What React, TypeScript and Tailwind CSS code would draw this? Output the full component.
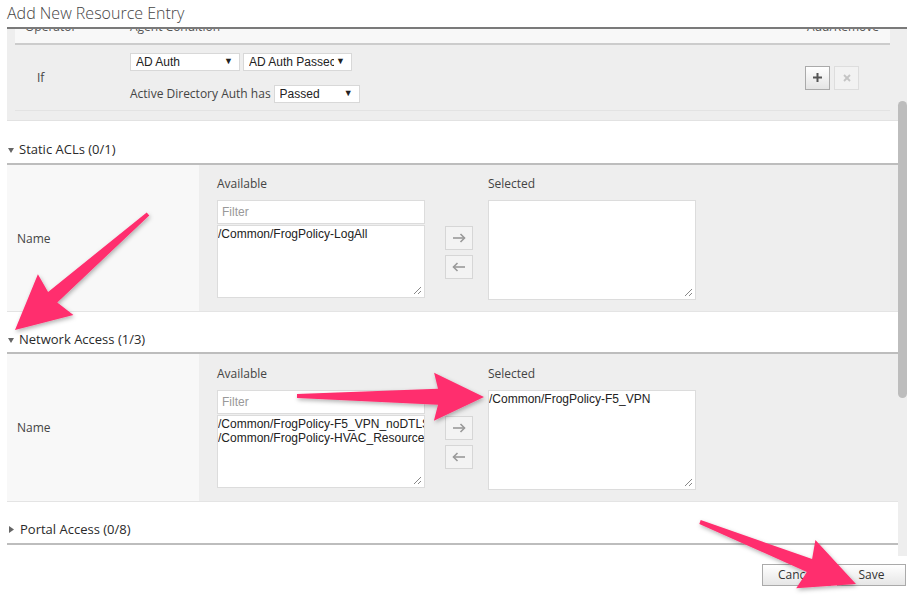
import React from "react";

type Pt = [number, number];

function arrowPoints(s: Pt, t: Pt, head: number, hw: number, w0: number, w1: number) {
  const dx = t[0] - s[0];
  const dy = t[1] - s[1];
  const len = Math.hypot(dx, dy);
  const ux = dx / len;
  const uy = dy / len;
  const nx = -uy;
  const ny = ux;
  const bx = t[0] - head * ux;
  const by = t[1] - head * uy;
  const pts: Pt[] = [
    [s[0] + w0 * nx, s[1] + w0 * ny],
    [bx + w1 * nx, by + w1 * ny],
    [bx - 4 * ux + hw * nx, by - 4 * uy + hw * ny],
    [t[0], t[1]],
    [bx - 4 * ux - hw * nx, by - 4 * uy - hw * ny],
    [bx - w1 * nx, by - w1 * ny],
    [s[0] - w0 * nx, s[1] - w0 * ny],
  ];
  return pts.map((p) => `${p[0].toFixed(1)},${p[1].toFixed(1)}`).join(" ");
}

function Triangle({ open }: { open: boolean }) {
  return open ? (
    <svg width="6" height="5" viewBox="0 0 6 5" className="mr-[5px] mb-[5px]">
      <polygon points="0,0 6,0 3,5" fill="#666" />
    </svg>
  ) : (
    <svg width="5" height="7" viewBox="0 0 5 7" className="mr-[6px] mb-[5px] ml-[1px]">
      <polygon points="0,0 5,3.5 0,7" fill="#666" />
    </svg>
  );
}

function SectionHeader({ title, open, h, pb }: { title: string; open: boolean; h: string; pb: string }) {
  return (
    <div className={`${h} ${pb} flex items-end border-b-2 border-[#bdbdbd] bg-white pl-[1px]`}>
      <Triangle open={open} />
      <span className="text-[13px] leading-[18px] text-[#2a2a2a]">{title}</span>
    </div>
  );
}

function Resizer() {
  return (
    <svg width="9" height="9" viewBox="0 0 9 9" className="absolute bottom-[2px] right-[2px]">
      <line x1="8" y1="1" x2="1" y2="8" stroke="#888" strokeWidth="1" />
      <line x1="8" y1="5" x2="5" y2="8" stroke="#888" strokeWidth="1" />
    </svg>
  );
}

function ArrowBtn({ dir }: { dir: "right" | "left" }) {
  return (
    <div className="flex h-[24px] w-[28px] items-center justify-center border border-[#d6d6d6] bg-[#f3f3f3]">
      <svg width="14" height="10" viewBox="0 0 14 10">
        {dir === "right" ? (
          <g stroke="#999" strokeWidth="1.6" fill="none">
            <line x1="1" y1="5" x2="12.5" y2="5" />
            <polyline points="8.5,1 12.5,5 8.5,9" />
          </g>
        ) : (
          <g stroke="#999" strokeWidth="1.6" fill="none">
            <line x1="1.5" y1="5" x2="13" y2="5" />
            <polyline points="5.5,1 1.5,5 5.5,9" />
          </g>
        )}
      </svg>
    </div>
  );
}

function SectionBody({ h, pt, available, selected }: { h: string; pt: string; available: string[]; selected: string[] }) {
  return (
    <div className={`${h} flex border-b border-[#e4e4e4]`}>
      <div className="flex w-[192px] items-center bg-[#f8f8f8] pl-[10px] pt-[1px] text-[12px] text-[#444]">Name</div>
      <div className={`flex flex-1 bg-[#eeeeee] pl-[18px] ${pt}`}>
        <div className="w-[208px]">
          <div className="mb-[8px] h-[16px] text-[12px] leading-[16px] text-[#444]">Available</div>
          <div className="flex h-[24px] items-center border border-[#dcdcdc] bg-white pl-[4px] font-['Liberation_Sans',Arial,sans-serif] text-[12px] text-[#999]">
            Filter
          </div>
          <div className="relative mt-[1px] h-[73px] overflow-hidden border border-[#dcdcdc] bg-white pt-[1px] font-['Liberation_Sans',Arial,sans-serif] text-[12px] leading-[14px] text-[#222]">
            {available.map((a) => (
              <div key={a} className="whitespace-nowrap">{a}</div>
            ))}
            <Resizer />
          </div>
        </div>
        <div className="ml-[20px] mt-[50px] flex flex-col gap-[5px]">
          <ArrowBtn dir="right" />
          <ArrowBtn dir="left" />
        </div>
        <div className="ml-[15px] w-[208px]">
          <div className="mb-[8px] h-[16px] text-[12px] leading-[16px] text-[#444]">Selected</div>
          <div className="relative h-[100px] overflow-hidden border border-[#dcdcdc] bg-white pt-[1px] font-['Liberation_Sans',Arial,sans-serif] text-[12px] leading-[14px] text-[#222]">
            {selected.map((a) => (
              <div key={a} className="whitespace-nowrap">{a}</div>
            ))}
            <Resizer />
          </div>
        </div>
      </div>
    </div>
  );
}

function Select({ w, label }: { w: string; label: string }) {
  return (
    <div className={`${w} flex h-[18px] items-center justify-between overflow-hidden border border-[#d8d8d8] bg-white pl-[5px] pr-[6px] font-['Liberation_Sans',Arial,sans-serif] text-[12px] text-[#222]`}>
      <span className="overflow-hidden whitespace-nowrap">{label}</span>
      <span className="ml-[2px] text-[9px] text-[#222]">▼</span>
    </div>
  );
}

export default function App() {
  const pink = "#ff2e6e";
  return (
    <div className="relative h-[600px] w-[918px] overflow-hidden bg-white font-['Open_Sans',sans-serif] text-[#333]">
      <div className="h-[27px] pl-[7px] pt-[3px] text-[16px] font-light leading-[20px] text-[#444]">Add New Resource Entry</div>
      <div className="ml-[7px] flex h-[529px] w-[900px] border-t-2 border-[#7a7a7a]">
        <div className="w-[891px] overflow-hidden">
          {/* condition block */}
          <div className="border-b border-[#e2e2e2] bg-[#eeeeee] px-[8px] pb-[9px]">
            <div className="flex h-[16px] overflow-hidden border-b-2 border-[#cccccc] bg-[#f8f8f8] text-[12px] leading-[14px] text-[#555]">
              <span className="-mt-[9px] ml-[10px] w-[105px]">Operator</span>
              <span className="-mt-[9px]">Agent Condition</span>
              <span className="-mt-[9px] ml-auto mr-[11px]">Add/Remove</span>
            </div>
            <div className="flex h-[66px] items-center border-b border-[#e3e3e3]">
              <div className="w-[115px] pl-[22px] pt-[1px] text-[12px] text-[#444]">If</div>
              <div className="flex flex-col gap-[15px] self-start pt-[8px]">
                <div className="flex gap-[3px]">
                  <Select w="w-[110px]" label="AD Auth" />
                  <Select w="w-[109px]" label="AD Auth Passec" />
                </div>
                <div className="-mt-[1px] flex items-center gap-[3px]">
                  <span className="font-['Open_Sans',sans-serif] text-[12px] text-[#444]">Active Directory Auth has</span>
                  <Select w="w-[86px]" label="Passed" />
                </div>
              </div>
              <div className="ml-auto mr-[31px] flex gap-[4px]">
                <div className="flex h-[24px] w-[25px] items-center justify-center border border-[#aaaaaa] bg-gradient-to-b from-white to-[#e4e4e4]">
                  <svg width="9" height="9" viewBox="0 0 9 9">
                    <rect x="3.5" y="0" width="2" height="9" fill="#555" />
                    <rect x="0" y="3.5" width="9" height="2" fill="#555" />
                  </svg>
                </div>
                <div className="flex h-[24px] w-[25px] items-center justify-center border border-[#dddddd] bg-[#f2f2f2]">
                  <svg width="8" height="8" viewBox="0 0 8 8">
                    <line x1="1" y1="1" x2="7" y2="7" stroke="#c4c4c4" strokeWidth="1.8" />
                    <line x1="7" y1="1" x2="1" y2="7" stroke="#c4c4c4" strokeWidth="1.8" />
                  </svg>
                </div>
              </div>
            </div>
          </div>

          <SectionHeader title="Static ACLs (0/1)" open h="h-[44px]" pb="pb-[5px]" />
          <SectionBody
            h="h-[147px]"
            pt="pt-[11px]"
            available={["/Common/FrogPolicy-LogAll"]}
            selected={[]}
          />
          <SectionHeader title="Network Access (1/3)" open h="h-[42px]" pb="pb-[4px]" />
          <SectionBody
            h="h-[148px]"
            pt="pt-[12px]"
            available={["/Common/FrogPolicy-F5_VPN_noDTLS", "/Common/FrogPolicy-HVAC_Resources"]}
            selected={["/Common/FrogPolicy-F5_VPN"]}
          />
          <SectionHeader title="Portal Access (0/8)" open={false} h="h-[43px]" pb="pb-[5px]" />
        </div>
        <div className="w-[9px] bg-[#eeeeee] pt-[72px]">
          <div className="h-[297px] rounded-[5px] bg-[#bdbdbd]" />
        </div>
      </div>
      <div className="flex justify-end gap-[6px] pr-[12px] pt-[8px]">
        <div className="flex h-[22px] w-[69px] items-center justify-center border border-[#aaaaaa] bg-gradient-to-b from-white to-[#e6e6e6] text-[12px] text-[#333]">
          Cancel
        </div>
        <div className="flex h-[22px] w-[69px] items-center justify-center border border-[#aaaaaa] bg-gradient-to-b from-white to-[#e6e6e6] text-[12px] text-[#333]">
          Save
        </div>
      </div>

      <svg className="pointer-events-none absolute left-0 top-0" width="918" height="600" viewBox="0 0 918 600">
        <defs>
          <filter id="sh" x="-20%" y="-20%" width="140%" height="140%">
            <feDropShadow dx="1" dy="2" stdDeviation="2" floodColor="#000" floodOpacity="0.3" />
          </filter>
        </defs>
        <g fill={pink} filter="url(#sh)">
          <polygon points={arrowPoints([148, 214], [15, 330], 50, 27, 2, 7)} />
          <polygon points={arrowPoints([297, 396], [484, 397], 46, 24, 2, 8)} />
          <polygon points={arrowPoints([700, 522], [856, 584], 50, 26, 2, 7)} />
        </g>
      </svg>
    </div>
  );
}
